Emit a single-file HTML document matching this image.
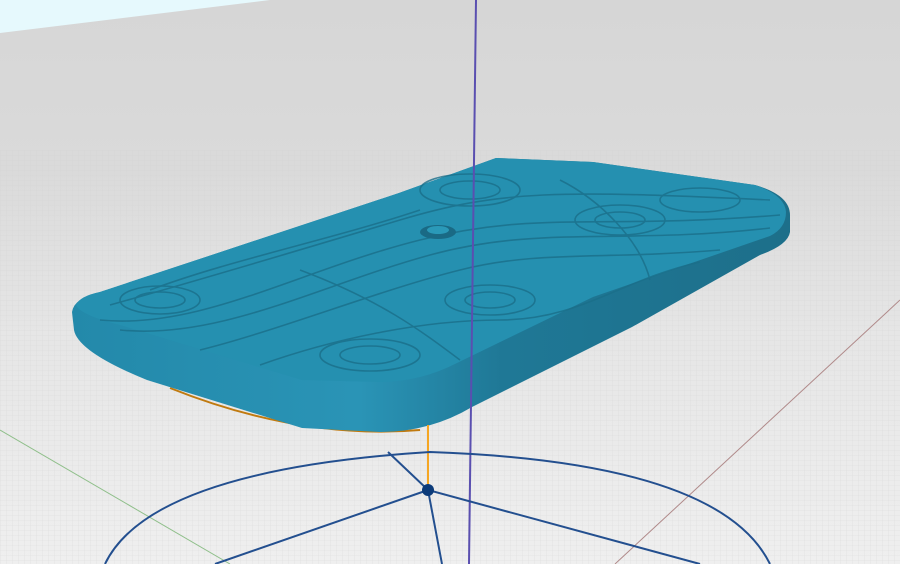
<!DOCTYPE html>
<html><head><style>html,body{margin:0;padding:0;width:900px;height:564px;overflow:hidden;background:#dcdcdc}</style></head>
<body>
<svg width="900" height="564" viewBox="0 0 900 564" xmlns="http://www.w3.org/2000/svg">
<defs>
<linearGradient id="g" x1="0" y1="0" x2="0" y2="1">
<stop offset="0" stop-color="#d6d6d6"/>
<stop offset="0.3" stop-color="#dadada"/>
<stop offset="0.6" stop-color="#e6e6e6"/>
<stop offset="1" stop-color="#efefef"/>
</linearGradient>
<pattern id="grid" width="6" height="5" patternUnits="userSpaceOnUse">
<path d="M0 0H6M0 0V5" stroke="#d0d0d0" stroke-width="0.6" fill="none"/>
</pattern>
<linearGradient id="side" x1="0" y1="0" x2="1" y2="0">
<stop offset="0" stop-color="#2389aa"/>
<stop offset="0.4" stop-color="#2a94b6"/>
<stop offset="0.6" stop-color="#1f7896"/>
<stop offset="1" stop-color="#1d6f8a"/>
</linearGradient>
</defs>
<rect width="900" height="564" fill="url(#g)"/>
<rect y="150" width="900" height="414" fill="url(#grid)" opacity="0.6"/>
<polygon points="0,0 270,0 0,33" fill="#e6f9fd"/>
<line x1="0" y1="430" x2="230" y2="564" stroke="#8fbf8a" stroke-width="1"/>
<line x1="900" y1="300" x2="615" y2="564" stroke="#b08a8a" stroke-width="1"/>
<path d="M170,388 Q300,440 420,430" stroke="#c07a10" stroke-width="2" fill="none"/>
<path d="M100,292 L399,193 L496,158 L593,162 L755,185 Q790,195 790,215 L790,232 Q788,245 760,255 L632,327 L472,407 Q430,432 380,432 L302,428 L147,380 Q78,352 74,330 L72,312 Q74,298 100,292 Z" fill="url(#side)"/>
<path d="M100,292 L399,193 L496,158 L593,162 L755,185 Q785,195 786,212 Q786,228 770,236 L593,297 L457,363 Q420,382 380,382 L302,380 L120,325 Q80,315 76,305 Q80,296 100,292 Z" fill="#2590b0"/>
<g fill="none" stroke="#1b6f8a" stroke-width="1.6" opacity="0.8">
<ellipse cx="160" cy="300" rx="40" ry="14"/><ellipse cx="160" cy="300" rx="25" ry="8"/>
<ellipse cx="370" cy="355" rx="50" ry="16"/><ellipse cx="370" cy="355" rx="30" ry="9"/>
<ellipse cx="470" cy="190" rx="50" ry="16"/><ellipse cx="470" cy="190" rx="30" ry="9"/>
<ellipse cx="490" cy="300" rx="45" ry="15"/><ellipse cx="490" cy="300" rx="25" ry="8"/>
<ellipse cx="620" cy="220" rx="45" ry="15"/><ellipse cx="620" cy="220" rx="25" ry="8"/>
<ellipse cx="700" cy="200" rx="40" ry="12"/>
<path d="M100,320 C200,330 300,270 420,240 S600,230 780,215"/>
<path d="M120,330 C220,340 320,285 430,255 S620,245 770,228"/>
<path d="M110,305 C200,280 300,250 400,220 S560,190 770,200"/>
<path d="M200,350 C280,330 380,290 460,270 S600,260 720,250"/>
<path d="M260,365 C330,340 420,320 500,320 S620,280 700,262"/>
<path d="M150,290 C230,260 330,240 420,210"/>
<path d="M300,270 C380,300 420,330 460,360"/>
<path d="M560,180 C600,200 640,240 650,280"/>
</g>
<ellipse cx="438" cy="232" rx="18" ry="7" fill="#1a6a85"/>
<ellipse cx="438" cy="230" rx="11" ry="4" fill="#2a99b8"/>
<line x1="476" y1="0" x2="469" y2="564" stroke="#5a4fb0" stroke-width="2"/>
<line x1="428" y1="425" x2="428" y2="490" stroke="#f5a623" stroke-width="2"/>
<path d="M105,564 Q150,470 430,452 Q720,462 770,564" fill="none" stroke="#234f8f" stroke-width="2"/>
<path d="M388,452 L428,490 L700,564 M428,490 L442,564 M428,490 L215,564" stroke="#234f8f" stroke-width="2" fill="none"/>
<circle cx="428" cy="490" r="6" fill="#0c3b7a"/>
</svg>
</body></html>
